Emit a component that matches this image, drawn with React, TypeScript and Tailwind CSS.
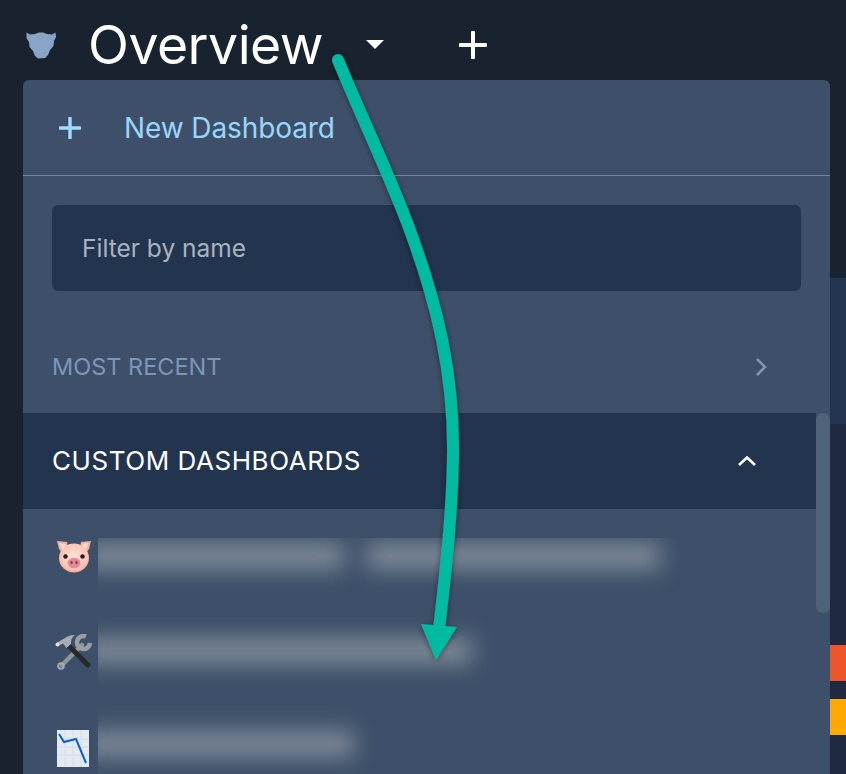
import React from "react";

const font = { fontFamily: '"Inter", "Liberation Sans", sans-serif' };

function Panther() {
  return (
    <svg width="32" height="30" viewBox="0 0 32 30" className="shrink-0">
      <path
        d="M1.5 2.5 L5 4.5 L10 4 L14 2.5 L18 2.5 L22 4 L27 4.5 L30.5 2.5 L31 7 L29 11 L28.5 16 L25 20 L23 25 L20 28 L13 28.5 L10 26 L8 21 L4.5 17 L4 12 L1.5 8 Z"
        fill="#88a5c8"
      />
    </svg>
  );
}

function Pig() {
  return (
    <svg width="36" height="34" viewBox="0 0 36 34">
      <defs>
        <radialGradient id="pigface" cx="50%" cy="45%" r="60%">
          <stop offset="0%" stopColor="#fde4d8" />
          <stop offset="75%" stopColor="#f8c4b2" />
          <stop offset="100%" stopColor="#e79c8c" />
        </radialGradient>
      </defs>
      <path d="M1 1 L11 2 L12 8 L6 13 L3 9 Z" fill="#f3b1a0" />
      <path d="M35 1 L25 2 L24 8 L30 13 L33 9 Z" fill="#f3b1a0" />
      <path d="M3.5 3 L9.5 4 L9 8 L6 10 Z" fill="#fbd9cc" />
      <path d="M32.5 3 L26.5 4 L27 8 L30 10 Z" fill="#fbd9cc" />
      <ellipse cx="18" cy="18" rx="15" ry="14.5" fill="url(#pigface)" />
      <circle cx="9.5" cy="16.5" r="2.2" fill="#2a1a1a" />
      <circle cx="26.5" cy="16.5" r="2.2" fill="#2a1a1a" />
      <ellipse cx="18" cy="23" rx="6.5" ry="5.2" fill="#e58a9a" />
      <ellipse cx="15.5" cy="22.5" rx="1.2" ry="1.7" fill="#8c3d52" />
      <ellipse cx="20.5" cy="22.5" rx="1.2" ry="1.7" fill="#8c3d52" />
    </svg>
  );
}

function Tools() {
  return (
    <svg width="37" height="36" viewBox="0 0 37 36">
      <path d="M27 11 L7 31" stroke="#8f959d" strokeWidth="4.5" strokeLinecap="round" />
      <circle cx="6" cy="32" r="2.8" fill="none" stroke="#a4a9b0" strokeWidth="2" />
      <path d="M31 2.5 A6.5 6.5 0 1 0 35 9" fill="none" stroke="#9a9fa6" strokeWidth="4.5" />
      <path d="M14 12 L33 31" stroke="#26282c" strokeWidth="5" strokeLinecap="round" />
      <path d="M1.5 9 L10 4 Q14 1 20 1 Q15.5 4 16 10 L11.5 14 L8 9.5 L3 12 Z" fill="#a7adb5" />
      <circle cx="2.5" cy="10.5" r="2" fill="#dfe4ea" />
    </svg>
  );
}

function Chart() {
  return (
    <svg width="32" height="37" viewBox="0 0 32 37">
      <rect x="0" y="0" width="32" height="37" fill="#e3ebf1" />
      <path d="M0 9H32M0 17H32M0 25H32M8 0V37M16 0V37M24 0V37" stroke="#d3dde6" strokeWidth="1" />
      <path d="M2 4 L7 12 L19 9 L29 33" fill="none" stroke="#0b60c9" strokeWidth="2" />
    </svg>
  );
}

function Chevron({ dir, color }: { dir: "up" | "right"; color: string }) {
  return dir === "up" ? (
    <svg width="20" height="12" viewBox="0 0 20 12">
      <path d="M2 10 L10 2.5 L18 10" fill="none" stroke={color} strokeWidth="2.6" />
    </svg>
  ) : (
    <svg width="12" height="20" viewBox="0 0 12 20">
      <path d="M2 2 L10 10 L2 18" fill="none" stroke={color} strokeWidth="2.6" />
    </svg>
  );
}

export default function App() {
  return (
    <div className="relative h-[774px] w-[846px] overflow-hidden bg-[#19222f] text-white" style={font}>
      {/* Header */}
      <header className="flex h-[80px] items-center pl-[25px] pt-[9px]">
        <Panther />
        <h1 className="ml-[31px] w-[235px] whitespace-nowrap text-[53.5px] leading-none font-normal tracking-[-0.5px]">
          Overview
        </h1>
        <div className="ml-[43px] h-0 w-0 border-x-[9px] border-t-[9px] border-x-transparent border-t-white" />
        <svg width="28" height="28" viewBox="0 0 28 28" className="ml-[75px]">
          <path d="M14 1.5V26.5M1.5 14H26.5" stroke="white" strokeWidth="4" strokeLinecap="round" />
        </svg>
      </header>

      <div className="flex">
        {/* Dropdown panel */}
        <section className="relative ml-[23px] w-[807px] shrink-0 rounded-t-[6px] bg-[#3e5069]">
          <div className="flex h-[95px] items-center pl-[36px]">
            <svg width="22" height="22" viewBox="0 0 22 22">
              <path d="M11 1V21M1 11H21" stroke="#a3daff" strokeWidth="3.4" strokeLinecap="round" />
            </svg>
            <span className="ml-[43px] text-[28px] leading-none text-[#9bd5fb] tracking-[-0.1px]">
              New Dashboard
            </span>
          </div>
          <div className="h-px bg-[#7387a3]" />
          <div className="px-[29px] pt-[29px]">
            <div className="flex h-[86px] items-center rounded-[6px] bg-[#23344f] pl-[30px] text-[24.5px] text-[#a9b3c0]">
              Filter by name
            </div>
          </div>
          <div className="flex h-[122px] items-center justify-between pt-[29px] pl-[29px] pr-[63px]">
            <span className="text-[23.5px] leading-none text-[#7b97b8]">MOST RECENT</span>
            <Chevron dir="right" color="#7b97b8" />
          </div>
          <div className="mr-[14px] flex h-[96px] items-center justify-between bg-[#23344f] pl-[29px] pr-[59px]">
            <span className="text-[26px] leading-none tracking-[0.55px]">CUSTOM DASHBOARDS</span>
            <Chevron dir="up" color="#ffffff" />
          </div>
          <div className="absolute top-[333px] right-0 h-[200px] w-[14px] rounded-[7px] bg-[#50627a]" />

          {/* Dashboard list */}
          <div className="flex pl-[32px]">
            <div className="flex w-[43px] shrink-0 flex-col pt-[31px]">
              <div className="flex h-[94px] items-start pl-px"><Pig /></div>
              <div className="flex h-[96px] items-start"><Tools /></div>
              <div className="flex h-[96px] items-start pl-[2px]"><Chart /></div>
            </div>
            <div className="mt-[29px] h-[300px] flex-1 overflow-hidden">
              <div className="ml-[-14px] flex flex-col pt-[5px]">
                <div className="flex gap-[22px]">
                  <div className="h-[26px] w-[260px] bg-[#808b9a] blur-[11px]" />
                  <div className="h-[26px] w-[294px] bg-[#808b9a] blur-[11px]" />
                </div>
                <div className="mt-[69px] h-[26px] w-[388px] bg-[#808b9a] blur-[11px]" />
                <div className="mt-[67px] h-[26px] w-[270px] bg-[#808b9a] blur-[11px]" />
              </div>
            </div>
          </div>
        </section>

        {/* Background sliver to the right */}
        <aside className="flex h-[694px] flex-1 flex-col pt-[198px]">
          <div className="h-[146px] bg-[#23344f]" />
          <div className="flex flex-1 flex-col bg-[#1e2941] pt-[221px]">
            <div className="h-[36px] bg-[#ee5329]" />
            <div className="mt-[18px] h-[36px] bg-[#ffa800]" />
          </div>
        </aside>
      </div>

      {/* Annotation arrow drawn over the screenshot */}
      <svg width="846" height="774" viewBox="0 0 846 774" className="pointer-events-none absolute top-0 left-0">
        <defs>
          <filter id="arrowshadow" x="-20%" y="-5%" width="140%" height="110%">
            <feDropShadow dx="0" dy="1" stdDeviation="3" floodColor="#000" floodOpacity="0.45" />
          </filter>
        </defs>
        <g filter="url(#arrowshadow)">
          <path
            d="M338 60 C 362 118, 388 172, 408 225 C 438 305, 454 375, 453 455 C 452 520, 445 575, 439 630"
            fill="none"
            stroke="#00baa2"
            strokeWidth="12"
            strokeLinecap="round"
          />
          <path d="M421 624 L457 627 L436 660 Z" fill="#00baa2" />
        </g>
      </svg>
    </div>
  );
}
